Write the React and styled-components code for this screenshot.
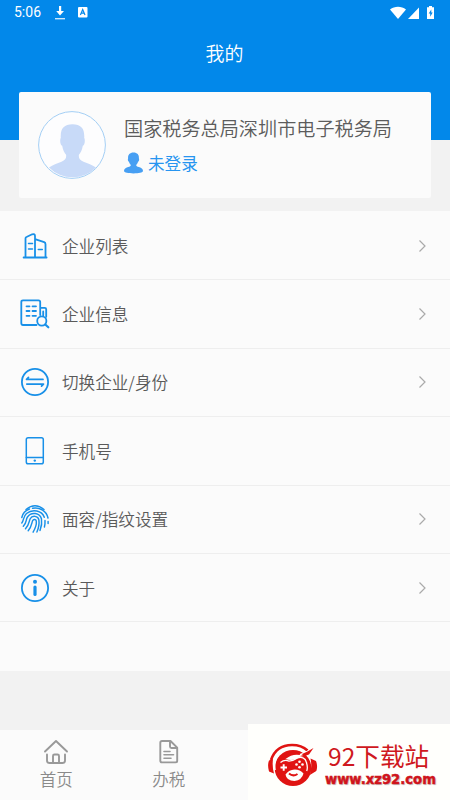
import styled, { createGlobalStyle } from "styled-components";

const GlobalStyle = createGlobalStyle`
  * {
    box-sizing: border-box;
  }
  body {
    margin: 0;
    background: #f2f2f2;
    font-family: "Noto Sans CJK SC", sans-serif;
    font-weight: 350;
  }
`;
const Page = styled.div`
  position: relative;
  width: 450px;
  height: 800px;
  display: flex;
  flex-direction: column;
  overflow: hidden;
  background: #f2f2f2;
`;
const Header = styled.header`
  height: 140px;
  flex-shrink: 0;
  background: #0288ea;
  color: #fff;
`;
const StatusBar = styled.div`
  height: 25px;
  padding: 0 14px;
  display: flex;
  align-items: center;
  justify-content: space-between;
`;
const StatusGroup = styled.div`
  display: flex;
  align-items: center;
  gap: ${({ gap }) => gap}px;
`;
const Clock = styled.span`
  width: 28px;
  font-family: Roboto, sans-serif;
  font-size: 14px;
  font-weight: 400;
  line-height: 27px;
`;
const Title = styled.h1`
  margin: 0;
  padding-right: 1px;
  font-size: 19px;
  font-weight: 350;
  line-height: 56px;
  text-align: center;
`;
const ProfileCard = styled.section`
  height: 106px;
  flex-shrink: 0;
  margin: -48px 19px 13px 19px;
  padding: 0 18px 0 19px;
  display: flex;
  align-items: center;
  gap: 18px;
  border-radius: 2px;
  background: #fbfbfb;
`;
const ProfileText = styled.div`
  display: flex;
  flex-direction: column;
  gap: 7px;
  padding-top: 1px;
`;
const OrgName = styled.div`
  font-size: 19.15px;
  line-height: 28px;
  white-space: nowrap;
  color: #5c5c5c;
`;
const LoginState = styled.div`
  display: flex;
  align-items: center;
  gap: 5px;
  font-size: 16.6px;
  font-weight: 400;
  line-height: 28px;
  color: #2795f0;
`;
const Menu = styled.ul`
  height: 460px;
  flex-shrink: 0;
  margin: 0;
  padding: 1px 0 0;
  list-style: none;
  background: #fbfbfb;
`;
const MenuRow = styled.li`
  height: 68.4px;
  padding: 0 23px 0 20px;
  display: flex;
  align-items: center;
  border-bottom: 1px solid #eee;
`;
const MenuIcon = styled.span`
  width: 30px;
  height: 30px;
  display: flex;
  align-items: center;
  justify-content: center;
  color: #1890e8;
`;
const MenuLabel = styled.span`
  flex: 1;
  padding-left: 12px;
  font-size: 16.6px;
  line-height: 24px;
  color: #5a5a5a;
`;
const TabBar = styled.nav`
  height: 70px;
  margin-top: auto;
  flex-shrink: 0;
  display: grid;
  grid-template-columns: repeat(4, 112.5px);
  background: #fbfbfb;
`;
const Tab = styled.div`
  padding-top: 8px;
  display: flex;
  flex-direction: column;
  align-items: center;
  font-size: 16.5px;
  line-height: 24px;
  color: #8a8a8a;
`;
const TabLabel = styled.span`
  margin-top: 3px;
`;
const SiteBadge = styled.div`
  position: absolute;
  right: 0;
  bottom: 0;
  width: 202px;
  height: 76px;
  padding: 18px 0 0 19px;
  display: flex;
  gap: 7px;
  background: #fffffc;
`;
const SiteText = styled.div`
  display: flex;
  flex-direction: column;
  margin-top: -1px;
`;
const SiteName = styled.span`
  padding-left: 3px;
  font-size: 24.6px;
  font-weight: 400;
  line-height: 28px;
  white-space: nowrap;
  color: #cf1820;
`;
const SiteUrl = styled.span`
  margin-top: 3px;
  font-family: "DejaVu Sans", sans-serif;
  font-size: 13.2px;
  font-weight: 700;
  line-height: 16px;
  white-space: nowrap;
  color: #d0141b;
  -webkit-text-stroke: 0.5px #d0141b;
  text-shadow: 1px 1px 1px #bbb;
`;

const DownloadIcon = () => (
  <svg width="10" height="14" viewBox="0 0 10 14" fill="#fff">
    <path d="M4 0h2.2v5H9L5 9.500 1.200 5H4z" />
    <path d="M0 12h10v1.400H0z" opacity="0.8" />
  </svg>
);
const KeyboardIcon = () => (
  <svg width="10" height="11" viewBox="0 0 10 11">
    <rect width="9.500" height="10.500" rx="1" fill="#fff" />
    <path
      d="M2.400 8l2.300-5.400L7 8M3.200 6.200h3"
      fill="none"
      stroke="#0288ea"
      strokeWidth="1.200"
    />
  </svg>
);
const SignalIcons = () => (
  <svg width="46" height="14" viewBox="0 0 46 14" fill="#fff">
    <path d="M0 3.600C4.500-.2 11.500-.2 16 3.600L8 13z" />
    <path d="M29 1.500V13H18z" />
    <path d="M39 1.200V0h3v1.200h2V13h-7V1.200z" />
    <path
      d="M41.300 3.500L38.700 7.500h1.500v3.300l2.500-4.200h-1.400z"
      fill="#0288ea"
    />
  </svg>
);
const Avatar = () => (
  <svg width="68" height="68" viewBox="0 0 68 68">
    <circle cx="34" cy="34" r="33.400" fill="#fdfdfe" />
    <path
      d="M11 56.500c4-2.800 8-3.700 12.500-5.700 4-1.800 5-3.500 4.600-7-1.800-2-3.300-5-3.900-9-2-.6-2.600-6-1.400-8-.6-9 3-13.500 11.700-13.500s12.300 4.500 11.700 13.500c1.200 2 .6 7.400-1.400 8-.6 4-2.100 7-3.900 9-.4 3.500.6 5.200 4.600 7 4.500 2 8.500 2.900 12.500 5.700a33 33 0 0 1-47 0z"
      fill="#c8daf8"
    />
    <circle cx="34" cy="34" r="33.400" fill="none" stroke="#a4cff5" />
  </svg>
);
const UserIcon = () => (
  <svg width="19" height="22" viewBox="0 0 19 22" fill="#479ff3">
    <path d="M9.500 0.500c3.800 0 5.600 2.300 5.400 5.700.6 1.500 0 3-.8 3.500-.4 1.400-1 2.400-1.900 3.200 0 1.300.9 1.600 2.700 2.200 3 .9 4.100 2.400 4.100 4 0 1.700-4.500 2.400-9.500 2.400S0 20.800 0 19.100c0-1.600 1.100-3.100 4.100-4 1.800-.6 2.700-.9 2.700-2.200-.9-.8-1.500-1.800-1.900-3.200-.8-.5-1.400-2-.8-3.500-.2-3.400 1.600-5.700 5.400-5.700z" />
  </svg>
);
const LineIcon = ({ children, weight = 1.8 }) => (
  <svg
    width="30"
    height="30"
    viewBox="0 0 30 30"
    fill="none"
    stroke="currentColor"
    strokeWidth={weight}
    strokeLinejoin="round"
    strokeLinecap="round"
  >
    {children}
  </svg>
);
const Buildings = () => (
  <LineIcon>
    <path d="M3.600 26.500h23M5.500 26.500V7.400Q5.500 6.400 6.500 6L12.200 3.300Q15 2.600 15 5V26.500M15 8.200l9.200 3q1.300.5 1.300 2V26.500" />
    <path d="M8.500 12.500h4M8.500 18h4M18.300 18.500h4" strokeWidth="1.500" />
  </LineIcon>
);
const CompanyInfo = () => (
  <LineIcon>
    <path d="M16.500 26H3Q1.300 26 1.300 24.300V3Q1.300 1.300 3 1.300h15.500q1.700 0 1.700 1.700v13M20.700 8.800h4q1.500 0 1.500 1.500v7.500M23.200 12.500v4" />
    <path d="M6.500 7.300h3M12.500 7.300h3.500M6.500 12h3M12.500 12h3.500M6.500 16.800h3M12.500 16.800h3.500" />
    <circle cx="21.800" cy="22" r="4.600" />
    <path d="M25.300 25.500l3 2.800" strokeWidth="2.200" />
  </LineIcon>
);
const SwitchCompany = () => (
  <LineIcon>
    <circle cx="15" cy="15" r="13.100" />
    <path
      d="M8.500 10.300L6.500 12.400H23M6.800 17.100h16.700L21.500 19.200"
      strokeWidth="1.700"
    />
  </LineIcon>
);
const Phone = () => (
  <LineIcon weight={1.5}>
    <rect x="6.300" y="1.800" width="17" height="26" rx="1.800" />
    <path d="M6.300 21.500h17" />
    <circle cx="14.800" cy="24.600" r="1.200" fill="currentColor" stroke="none" />
  </LineIcon>
);
const Fingerprint = () => (
  <LineIcon weight={1.45}>
    <path d="M6 5.500Q15-1.800 24 5.500" />
    <path d="M1.800 13.500C2.600 9.600 5.800 6.300 9.500 5M12.500 4.200C20 3 26.700 7 28 14" />
    <path d="M1.800 19C4 16.500 3 12.500 6.500 9.500 12.500 4.500 22 6.500 24.300 13.200M25 16.500c.2 2.500 0 4-.6 6.500M28.100 17.500v2" />
    <path d="M3.300 22.200C7 18.500 5.500 16 7.500 13 11 7.500 20 8.500 21.500 15c.6 3.800 0 7.500-1.500 11.500" />
    <path d="M5.500 24.700C9.500 20.500 8.600 18 10.200 14.800c2-3.800 8-3 8.700 1.200.6 4.500-.5 8.500-2 12" />
    <path d="M8.200 26.700C12 22.500 11.500 19 12.700 16.500c.9-1.800 3.400-1.200 3.600.7.4 3.800-1 7.300-3.200 11" />
  </LineIcon>
);
const Info = () => (
  <LineIcon>
    <circle cx="15" cy="15" r="13.100" />
    <circle cx="15" cy="8.700" r="2" fill="currentColor" stroke="none" />
    <path d="M15 14v7.500" strokeWidth="3.200" />
  </LineIcon>
);
const Chevron = () => (
  <svg width="9" height="14" viewBox="0 0 9 14">
    <path
      d="M1.500 1.500L7 7l-5.500 5.500"
      fill="none"
      stroke="#aaa"
      strokeWidth="1.200"
    />
  </svg>
);
const TabIcon = ({ children }) => (
  <svg
    width="26"
    height="26"
    viewBox="0 0 26 26"
    fill="none"
    stroke="#999"
    strokeWidth="1.900"
    strokeLinecap="round"
    strokeLinejoin="round"
  >
    {children}
  </svg>
);
const Home = () => (
  <TabIcon>
    <path d="M2 13.500L13 3l11 10.500M4 16.500v6q0 2.500 2.500 2.500h13q2.500 0 2.500-2.500v-6" />
    <path d="M10 25v-7q0-1.500 1.500-1.500h3q1.500 0 1.500 1.500v7" />
  </TabIcon>
);
const Document = () => (
  <TabIcon>
    <path d="M6 3h8.500l6.700 6.700v13q0 1.700-1.700 1.700H6q-1.700 0-1.700-1.700V4.700Q4.300 3 6 3zM14 3v5.500q0 1.500 1.500 1.500h5.500" />
    <path d="M8 13.500h6M8 16.800h9.500M8 20.200h7" strokeWidth="1.600" />
  </TabIcon>
);
const GamepadLogo = () => (
  <svg width="51" height="44" viewBox="0 0 51 44">
    <path
      d="M4 18C7.500 8 15.500 3 25 3c7 0 12 2.200 15.500 5.500"
      fill="none"
      stroke="#e01412"
      strokeWidth="2.600"
    />
    <ellipse cx="26" cy="26" rx="18.300" ry="18" fill="#e01412" />
    <path
      d="M8 28C6 15 14 6.800 25 6.400c6 0 9.500 1.500 12.500 4"
      fill="none"
      stroke="#fffffc"
      strokeWidth="1.600"
    />
    <path
      d="M6 17L2 18.500Q.2 23 2 29.500l5 2q-2-7-1-14.500zM43.500 16.500l5.500 2.500q2 5 .3 10l-6.500 4q2.500-8 .7-16.500z"
      fill="#e01412"
    />
    <path
      d="M33 12.800l13-5.500-5 6"
      fill="none"
      stroke="#fffffc"
      strokeWidth="1.500"
    />
    <path d="M46.500 6L40 9.800 35 12l2.500 2 4.500-1.500z" fill="#e01412" />
    <path
      d="M14.500 20q3.500-2.700 7.500-.8 4-.2 7.500-2.700c5-2.500 9-.5 9.800 3.500 1.500 4 1.700 9-.8 10.500-3 .5-4-3-8.500-4q-5-.2-7.500 2.500c-2.500 3-6 5-8.500 2.500s-2-8.500.5-11.500z"
      fill="#e01412"
    />
    <path
      d="M13.500 20.500q4-3.300 8.500-1.300 4-.2 7.500-2.700c5-2.500 9-.5 9.800 3.500 1 3 1.400 6.500.4 9"
      fill="none"
      stroke="#fffffc"
      strokeWidth="1.300"
    />
    <path
      d="M18.500 17q8-6.500 18-3-4 .5-8 3.300-5 1.700-10-.3z"
      fill="#fffffc"
    />
    <path d="M13.500 25.500h6.500M16.700 22.200v6.500" stroke="#fffffc" strokeWidth="1.900" />
    <g fill="#fffffc">
      <circle cx="32.500" cy="19.700" r="1.300" />
      <circle cx="35.500" cy="22.500" r="1.300" />
      <circle cx="29.500" cy="22.500" r="1.300" />
      <circle cx="32.500" cy="25.300" r="1.300" />
      <path d="M18.500 32.500q3.500-4.500 7.500-4.800 6.500-.8 10.500 3.800-1.500 6.500-9 7.500-8 0-9-6.500z" />
    </g>
    <path d="M22 31.500q4 3.500 8.500.5" fill="none" stroke="#e01412" strokeWidth="2" />
  </svg>
);

const menuItems = [
  { label: "企业列表", icon: <Buildings />, arrow: true },
  { label: "企业信息", icon: <CompanyInfo />, arrow: true },
  { label: "切换企业/身份", icon: <SwitchCompany />, arrow: true },
  { label: "手机号", icon: <Phone />, arrow: false },
  { label: "面容/指纹设置", icon: <Fingerprint />, arrow: true },
  { label: "关于", icon: <Info />, arrow: true },
];

export default () => {
  return (
    <Page>
      <GlobalStyle />
      <Header>
        <StatusBar>
          <StatusGroup gap={13}>
            <Clock>5:06</Clock>
            <DownloadIcon />
            <KeyboardIcon />
          </StatusGroup>
          <SignalIcons />
        </StatusBar>
        <Title>我的</Title>
      </Header>
      <ProfileCard>
        <Avatar />
        <ProfileText>
          <OrgName>国家税务总局深圳市电子税务局</OrgName>
          <LoginState>
            <UserIcon />
            未登录
          </LoginState>
        </ProfileText>
      </ProfileCard>
      <Menu>
        {menuItems.map((item) => (
          <MenuRow key={item.label}>
            <MenuIcon>{item.icon}</MenuIcon>
            <MenuLabel>{item.label}</MenuLabel>
            {item.arrow && <Chevron />}
          </MenuRow>
        ))}
      </Menu>
      <TabBar>
        <Tab>
          <Home />
          <TabLabel>首页</TabLabel>
        </Tab>
        <Tab>
          <Document />
          <TabLabel>办税</TabLabel>
        </Tab>
      </TabBar>
      <SiteBadge>
        <GamepadLogo />
        <SiteText>
          <SiteName>92下载站</SiteName>
          <SiteUrl>www.xz92.com</SiteUrl>
        </SiteText>
      </SiteBadge>
    </Page>
  );
};
